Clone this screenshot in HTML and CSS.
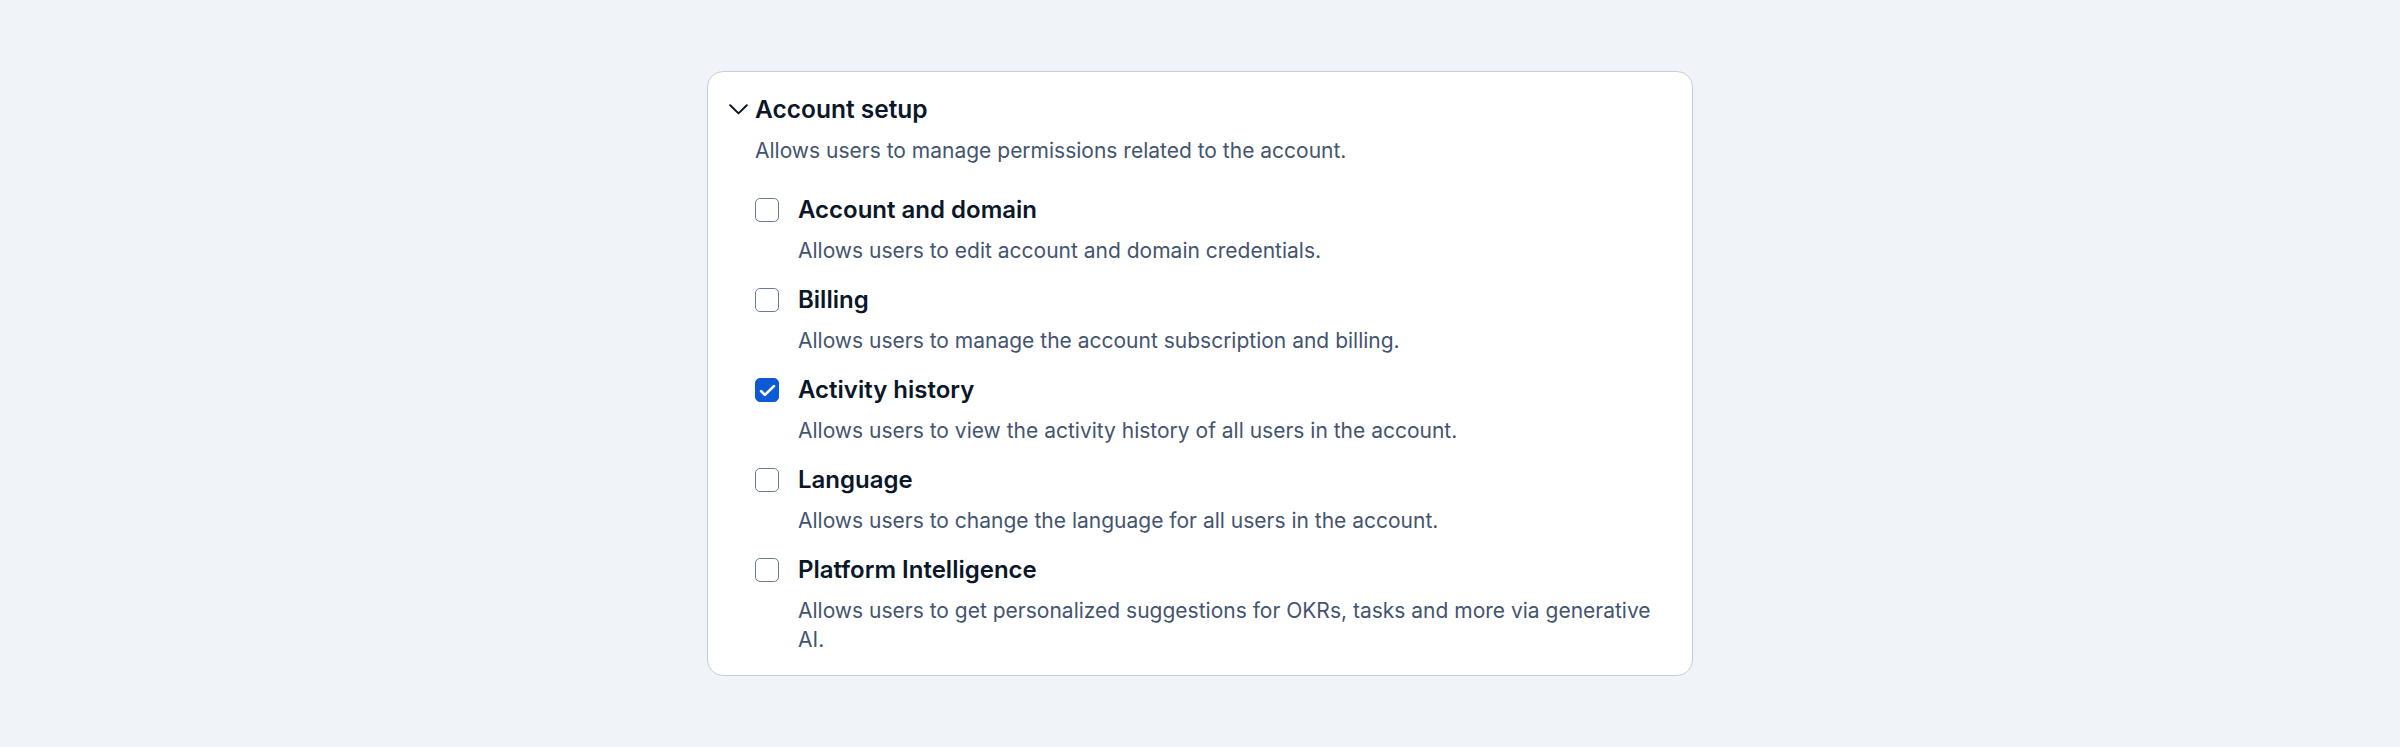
FILE: index.html
```html
<!DOCTYPE html>
<html lang="en">
<head>
  <meta charset="UTF-8" />
  <meta name="viewport" content="width=device-width, initial-scale=1" />
  <title>Account setup permissions</title>
  <link rel="stylesheet" href="styles.css">
</head>
<body>
  <section class="perm-card">
    <div class="perm-header">
      <svg class="chevron" width="19" height="11" viewBox="0 0 19 11" fill="none">
        <path d="M1.2 1.2 L9.5 9.4 L17.8 1.2" stroke="#0b1729" stroke-width="2" stroke-linecap="round" stroke-linejoin="round"/>
      </svg>
      <h2>Account setup</h2>
    </div>
    <p class="perm-desc">Allows users to manage permissions related to the account.</p>

    <ul class="perm-list">
      <li class="perm-item">
        <label class="perm-row">
          <span class="box"></span>
          <span class="perm-title">Account and domain</span>
        </label>
        <p class="item-desc">Allows users to edit account and domain credentials.</p>
      </li>
      <li class="perm-item">
        <label class="perm-row">
          <span class="box"></span>
          <span class="perm-title">Billing</span>
        </label>
        <p class="item-desc">Allows users to manage the account subscription and billing.</p>
      </li>
      <li class="perm-item">
        <label class="perm-row">
          <span class="box checked">
            <svg width="21" height="21" viewBox="1.5 1.5 21 21" fill="none">
              <path d="M5.6 12.6 L9.4 16.4 L18.4 7.6" stroke="#fff" stroke-width="2.7" stroke-linecap="round" stroke-linejoin="round"/>
            </svg>
          </span>
          <span class="perm-title">Activity history</span>
        </label>
        <p class="item-desc">Allows users to view the activity history of all users in the account.</p>
      </li>
      <li class="perm-item">
        <label class="perm-row">
          <span class="box"></span>
          <span class="perm-title">Language</span>
        </label>
        <p class="item-desc">Allows users to change the language for all users in the account.</p>
      </li>
      <li class="perm-item">
        <label class="perm-row">
          <span class="box"></span>
          <span class="perm-title">Platform Intelligence</span>
        </label>
        <p class="item-desc">Allows users to get personalized suggestions for OKRs, tasks and more via generative AI.</p>
      </li>
    </ul>
  </section>
</body>
</html>
```

FILE: styles.css
```css
body {
  margin: 0;
  background: #f0f3f7;
  font-family: Inter, "Noto Sans", sans-serif;
  color: #0b1729;
}
.perm-card {
  box-sizing: border-box;
  width: 986px;
  margin: 71px auto 0;
  padding: 20px 30px 21px 21px;
  background: #fff;
  border: 1.5px solid #c3cee0;
  border-radius: 16px;
}
.perm-header {
  display: flex;
  align-items: center;
}
.chevron {
  margin-right: 7px;
}
.perm-header h2 {
  margin: 0;
  font-size: 24.5px;
  line-height: 34px;
  font-weight: 600;
}
.perm-desc {
  margin: 10px 0 0 26px;
  font-size: 21px;
  line-height: 29px;
  color: #44546f;
}
.perm-list {
  list-style: none;
  margin: 29px 0 0 26px;
  padding: 0;
}
.perm-item + .perm-item {
  margin-top: 19.5px;
}
.perm-row {
  display: flex;
  align-items: center;
  gap: 19px;
}
.box {
  box-sizing: border-box;
  width: 24px;
  height: 24px;
  border: 1.5px solid #6a7c99;
  border-radius: 5px;
  display: flex;
  align-items: center;
  justify-content: center;
}
.box.checked {
  background: #0c5ad6;
  border-color: #0c5ad6;
}
.perm-title {
  font-size: 24px;
  line-height: 32px;
  font-weight: 600;
}
.item-desc {
  margin: 9.5px 0 0 43px;
  font-size: 21px;
  line-height: 29px;
  color: #44546f;
}
```
